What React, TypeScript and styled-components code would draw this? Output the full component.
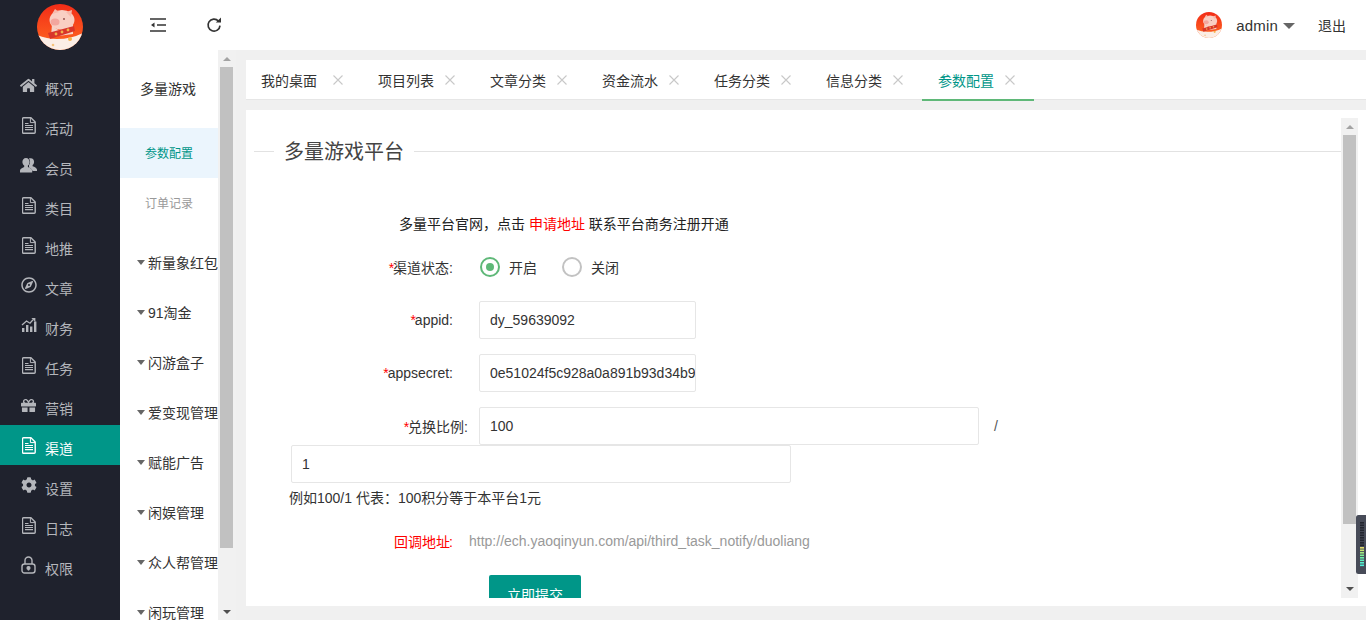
import React from 'react'
import styled, { createGlobalStyle } from 'styled-components'
import { FaHome, FaRegCompass, FaGift, FaCog } from 'react-icons/fa'

const GlobalStyle = createGlobalStyle`
  html, body {
    margin: 0;
    height: 100%;
    overflow: hidden;
    background: #f0f0f0;
    font-family: "Liberation Sans", "Noto Sans CJK SC", sans-serif;
    font-size: 14px;
    color: #333;
  }
  * { box-sizing: border-box; }
`

const Page = styled.div`
  display: flex;
  width: 1366px;
  height: 620px;
  overflow: hidden;
  position: relative;
`

const Sidebar = styled.aside`
  width: 120px;
  flex: none;
  background: #1f222d;
  padding-top: 4px;
`

const Logo = styled.div`
  display: flex;
  justify-content: center;
  height: 46px;
  margin-bottom: 15px;
`

const MenuItem = styled.div<{ $active?: boolean }>`
  display: flex;
  align-items: center;
  height: 40px;
  padding-left: 20px;
  gap: 8px;
  color: ${p => (p.$active ? '#fff' : '#b4b6bb')};
  background: ${p => (p.$active ? '#009688' : 'transparent')};
`

const MenuIcon = styled.span`
  display: flex;
  justify-content: center;
  width: 17px;
  font-size: 16px;
`

const MenuText = styled.span`
  margin-top: 5px;
  font-size: 14px;
`

const Main = styled.div`
  flex: 1;
  min-width: 0;
  display: flex;
  flex-direction: column;
`

const Topbar = styled.header`
  display: flex;
  align-items: center;
  height: 50px;
  flex: none;
  background: #fff;
  padding: 0 20px 0 30px;
`

const ToolButton = styled.span`
  display: flex;
  width: 16px;
  margin-right: 40px;
  color: #333;
`

const UserBox = styled.div`
  display: flex;
  align-items: center;
  margin-left: auto;
  color: #333;
`

const UserName = styled.span`
  margin-left: 14px;
  font-size: 15px;
  letter-spacing: 0.2px;
`

const Caret = styled.span`
  width: 0;
  height: 0;
  margin: 2px 23px 0 5px;
  border-style: solid;
  border-width: 6px 6px 0;
  border-color: #666 transparent transparent;
`

const Logout = styled.span`
  margin-top: -1px;
`

const Body = styled.div`
  flex: 1;
  min-height: 0;
  display: flex;
`

const SubNav = styled.nav`
  width: 98px;
  flex: none;
  background: #fff;
  overflow: hidden;
`

const SubTitle = styled.div`
  height: 78px;
  line-height: 78px;
  padding-left: 20px;
`

const SubLink = styled.div<{ $active?: boolean }>`
  height: 50px;
  line-height: 52px;
  text-align: center;
  font-size: 12px;
  color: ${p => (p.$active ? '#009688' : '#999')};
  background: ${p => (p.$active ? '#ebf5fd' : 'transparent')};
`

const SubGroups = styled.div`
  padding-top: 9px;
`

const SubGroup = styled.div`
  display: flex;
  align-items: center;
  height: 50px;
  padding-left: 17px;
  white-space: nowrap;
`

const GroupCaret = styled.span`
  flex: none;
  width: 0;
  height: 0;
  margin-right: 3px;
  border-style: solid;
  border-width: 5px 4.5px 0;
  border-color: #666 transparent transparent;
`

const Track = styled.div<{ $width: number }>`
  display: flex;
  flex-direction: column;
  flex: none;
  width: ${p => p.$width}px;
  height: 100%;
  background: #f1f1f1;
`

const Thumb = styled.div<{ $top: number; $height: number; $left: number; $width: number }>`
  margin: ${p => p.$top}px 0 0 ${p => p.$left}px;
  width: ${p => p.$width}px;
  height: ${p => p.$height}px;
  background: #c1c1c1;
`

const ArrowUp = styled.span<{ $left: number; $top: number }>`
  display: block;
  width: 0;
  height: 0;
  margin: ${p => p.$top}px 0 0 ${p => p.$left}px;
  border-style: solid;
  border-width: 0 4px 4px;
  border-color: transparent transparent #a3a3a3;
`

const ArrowDown = styled.span<{ $left: number; $bottom: number }>`
  display: block;
  width: 0;
  height: 0;
  margin: auto 0 ${p => p.$bottom}px ${p => p.$left}px;
  border-style: solid;
  border-width: 4px 4px 0;
  border-color: #505050 transparent transparent;
`

const Workspace = styled.div`
  flex: 1;
  min-width: 0;
  display: flex;
  flex-direction: column;
  padding: 10px 0 14px 10px;
`

const TabBar = styled.div`
  display: flex;
  flex: none;
  height: 40px;
  background: #fff;
  border-bottom: 1px solid #e6e6e6;
  margin-bottom: 10px;
`

const Tab = styled.div<{ $active?: boolean }>`
  display: flex;
  align-items: center;
  flex: none;
  width: 112px;
  height: 41px;
  padding-left: 16px;
  gap: 11px;
  font-size: 14px;
  color: ${p => (p.$active ? '#009688' : '#333')};
  border-bottom: 2px solid ${p => (p.$active ? '#5fb878' : 'transparent')};

  &:first-child {
    width: 116px;
    padding-left: 15px;
    gap: 16px;
  }
`

const TabClose = styled.svg`
  width: 10px;
  height: 10px;
  flex: none;
  stroke: #c8c8c8;
  stroke-width: 1.1;
  fill: none;
`

const Panel = styled.section`
  flex: 1;
  min-height: 0;
  display: flex;
  background: #fff;
  padding: 8px;
`

const Scroller = styled.div`
  flex: 1;
  min-width: 0;
  height: 100%;
  overflow: hidden;
`

const Legend = styled.div`
  display: flex;
  align-items: center;
  height: 26px;
  margin-top: 20px;
  margin-bottom: 50px;
  font-size: 20px;
  color: #444;

  &::before {
    content: '';
    width: 20px;
    height: 1px;
    background: #e2e2e2;
    margin-right: 10px;
  }

  &::after {
    content: '';
    flex: 1;
    height: 1px;
    background: #e2e2e2;
    margin-left: 10px;
  }
`

const LegendText = styled.span`
  margin-top: -2px;
`

const Notice = styled.div`
  margin-left: 145px;
  height: 20px;
  line-height: 20px;
  color: #222;
  margin-bottom: 14px;
`

const RedText = styled.span`
  color: #f00;
`

const Row = styled.div`
  display: flex;
  align-items: center;
  height: 38px;
  margin-bottom: 15px;
`

const Label = styled.label<{ $width?: number }>`
  flex: none;
  width: ${p => p.$width || 199}px;
  text-align: right;
  color: #333;
`

const Star = styled.span`
  color: #f00;
  margin-right: -1px;
`

const RadioGroup = styled.div`
  display: flex;
  align-items: center;
  margin-left: 27px;
`

const Radio = styled.span<{ $on?: boolean }>`
  display: flex;
  align-items: center;
  justify-content: center;
  flex: none;
  width: 20px;
  height: 20px;
  border-radius: 50%;
  border: 2px solid ${p => (p.$on ? '#5fb878' : '#c2c2c2')};

  &::after {
    content: '';
    display: ${p => (p.$on ? 'block' : 'none')};
    width: 8px;
    height: 8px;
    border-radius: 50%;
    background: #5fb878;
  }
`

const RadioText = styled.span`
  margin: 0 25px 0 9px;
  color: #333;
`

const Input = styled.input<{ $width: number }>`
  display: block;
  flex: none;
  width: ${p => p.$width}px;
  height: 38px;
  padding: 0 0 0 10px;
  border: 1px solid #e6e6e6;
  border-radius: 2px;
  outline: none;
  font: 14px "Liberation Sans", "Noto Sans CJK SC", sans-serif;
  color: #333;
  background: #fff;
`

const FieldGap = styled.div<{ $width: number }>`
  width: ${p => p.$width}px;
  flex: none;
`

const RatioRow = styled(Row)`
  margin-bottom: 0;
`

const Slash = styled.span`
  margin-left: 15px;
  color: #555;
`

const SecondInput = styled(Input)`
  margin-left: 37px;
`

const Help = styled.div`
  margin: 5px 0 0 35px;
  height: 20px;
  line-height: 20px;
  color: #333;
`

const CallbackRow = styled.div`
  display: flex;
  align-items: center;
  height: 20px;
  margin-top: 23px;
`

const CallbackColon = styled.span`
  color: #f00;
  margin-left: -1px;
`

const CallbackUrl = styled.span`
  margin-left: 16px;
  color: #999;
`

const Submit = styled.button`
  display: block;
  width: 92px;
  height: 38px;
  margin: 24px 0 0 235px;
  padding: 0;
  border: none;
  border-radius: 2px;
  background: #009688;
  color: #fff;
  font: 14px "Liberation Sans", "Noto Sans CJK SC", sans-serif;
`

const Widget = styled.svg`
  position: absolute;
  right: 0;
  top: 515px;
  width: 10px;
  height: 59px;
`

const Avatar: React.FC<{ size: number }> = ({ size }) => (
  <svg width={size} height={size} viewBox="0 0 46 46">
    <defs>
      <linearGradient id="pigSky" x1="0" y1="0" x2="0" y2="1">
        <stop offset="0" stopColor="#f22c17" />
        <stop offset="1" stopColor="#ff6b22" />
      </linearGradient>
      <clipPath id="pigClip">
        <circle cx="23" cy="23" r="23" />
      </clipPath>
    </defs>
    <g clipPath="url(#pigClip)">
      <rect width="46" height="46" fill="url(#pigSky)" />
      <path d="M0 31 Q10 35 20 35 Q34 35 46 29 V46 H0 Z" fill="#fbeee6" />
      <path d="M15 20 Q25 34 36 20 L36 30 L14 33 Z" fill="#f6d2c6" />
      <ellipse cx="25" cy="16" rx="12.5" ry="10" fill="#f9cfc3" />
      <path d="M15 10 L18 5 L22 8 Z M29 8 L35 6 L34 13 Z" fill="#f7b9ab" />
      <ellipse cx="18" cy="18" rx="4.5" ry="3.5" fill="#f3a79e" />
      <circle cx="27" cy="15" r="0.9" fill="#8c4a45" />
      <path d="M11 29 L37 22 L38 27 L13 35 Z" fill="#d8352a" />
      <circle cx="19" cy="30" r="1.4" fill="#f2b04a" />
      <circle cx="25" cy="28" r="1.4" fill="#f2b04a" />
      <circle cx="31" cy="26" r="1.4" fill="#f2b04a" />
      <circle cx="33" cy="35" r="2" fill="#f6b24d" />
      <circle cx="16" cy="41" r="1.3" fill="#f6c27a" />
    </g>
  </svg>
)

const IndentIcon = () => (
  <svg width="16" height="14" viewBox="0 0 16 14" fill="none" stroke="#333" strokeWidth="1.4">
    <path d="M0 1h16M7 7h9M0 13h16" />
    <path d="M4.5 4.5v5L1 7z" fill="#333" stroke="none" />
  </svg>
)

const RefreshIcon = () => (
  <svg width="16" height="16" viewBox="0 0 16 16" fill="none" stroke="currentColor" strokeWidth="1.7">
    <path d="M12.4 4 A6 6 0 1 0 14 8.6" />
    <path d="M9.8 5.6h5.2V0.4z" fill="currentColor" stroke="none" />
  </svg>
)

const FileIcon = () => (
  <svg width="14" height="17" viewBox="0 0 14 17">
    <path d="M1.5 0.8h7.4l4.3 4.3v10.1a1 1 0 0 1-1 1H1.5a1 1 0 0 1-1-1V1.8a1 1 0 0 1 1-1z" fill="none" stroke="currentColor" strokeWidth="1.4" />
    <path d="M8.4 1v4.6H13" fill="none" stroke="currentColor" strokeWidth="1" />
    <path d="M3 6h3.5v1H3zM3 8h8v1H3zM3 10h8v1H3zM3 12h8v1.2H3z" fill="currentColor" />
  </svg>
)

const UsersIcon = () => (
  <svg width="17" height="16" viewBox="0 0 17 16" fill="currentColor">
    <path d="M10.8 1.2c2 0 3.3 1.6 3.3 3.6 0 1.4-.6 2.6-1.5 3.3v1.2c2 .7 4.1 1.6 4.4 3.2V14h-4.4c-.3-1.7-1.8-2.8-3.6-3.6V8c.7-.9 1.1-1.9 1.1-3.1 0-1.3-.5-2.5-1.2-3.3.5-.3 1.2-.4 1.9-.4z" />
    <path d="M6 1c2.2 0 3.6 1.8 3.6 4 0 1.5-.6 2.8-1.7 3.6V10c2.2.8 4 1.8 4.3 3.4V15.6H0v-2.2c.3-1.6 2.1-2.6 4.2-3.4V8.6C3.1 7.8 2.4 6.5 2.4 5 2.4 2.8 3.8 1 6 1z" />
  </svg>
)

const StatsIcon = () => (
  <svg width="16" height="16" viewBox="0 0 16 16" fill="currentColor">
    <path d="M1 11h2.4v4H1zM5 8h2.4v7H5zM9 9.5h2.4V15H9zM13 4.5h2.4V15H13z" />
    <path d="M1 8 L5.5 4 L9 6.2 L12 2.8" fill="none" stroke="currentColor" strokeWidth="1.3" />
    <path d="M10.4 1h4v4z" />
  </svg>
)

const LockIcon = () => (
  <svg width="15" height="18" viewBox="0 0 15 18" fill="none" stroke="currentColor" strokeWidth="1.4">
    <path d="M4 8V4.5a3.5 3.5 0 0 1 7 0V8" />
    <rect x="1" y="8" width="13" height="9" rx="2.5" />
    <circle cx="7.5" cy="12" r="1.4" fill="currentColor" />
    <path d="M7.5 12v2.6" />
  </svg>
)

const menu: { text: string; icon: React.ReactNode; active?: boolean }[] = [
  { text: '概况', icon: <FaHome size={17} /> },
  { text: '活动', icon: <FileIcon /> },
  { text: '会员', icon: <UsersIcon /> },
  { text: '类目', icon: <FileIcon /> },
  { text: '地推', icon: <FileIcon /> },
  { text: '文章', icon: <FaRegCompass size={16} /> },
  { text: '财务', icon: <StatsIcon /> },
  { text: '任务', icon: <FileIcon /> },
  { text: '营销', icon: <FaGift size={15} /> },
  { text: '渠道', icon: <FileIcon />, active: true },
  { text: '设置', icon: <FaCog size={16} /> },
  { text: '日志', icon: <FileIcon /> },
  { text: '权限', icon: <LockIcon /> },
]

const groups = ['新量象红包', '91淘金', '闪游盒子', '爱变现管理', '赋能广告', '闲娱管理', '众人帮管理', '闲玩管理']
const tabs = ['我的桌面', '项目列表', '文章分类', '资金流水', '任务分类', '信息分类', '参数配置']

// dark segments first, then the lit part of the meter
const meterColors = [
  '#22252e', '#22252e', '#22252e', '#22252e', '#22252e', '#22252e', '#22252e', '#22252e', '#22252e', '#22252e',
  '#e0dc6a', '#c4e470', '#a0e880', '#80ec96', '#68eeaa', '#5ceebc', '#54eecb', '#4eeed8',
]

const App: React.FC = () => (
  <Page>
    <GlobalStyle />
    <Sidebar>
      <Logo>
        <Avatar size={46} />
      </Logo>
      {menu.map(item => (
        <MenuItem key={item.text} $active={item.active}>
          <MenuIcon>{item.icon}</MenuIcon>
          <MenuText>{item.text}</MenuText>
        </MenuItem>
      ))}
    </Sidebar>
    <Main>
      <Topbar>
        <ToolButton>
          <IndentIcon />
        </ToolButton>
        <ToolButton>
          <RefreshIcon />
        </ToolButton>
        <UserBox>
          <Avatar size={26} />
          <UserName>admin</UserName>
          <Caret />
          <Logout>退出</Logout>
        </UserBox>
      </Topbar>
      <Body>
        <SubNav>
          <SubTitle>多量游戏</SubTitle>
          <SubLink $active>参数配置</SubLink>
          <SubLink>订单记录</SubLink>
          <SubGroups>
            {groups.map(g => (
              <SubGroup key={g}>
                <GroupCaret />
                {g}
              </SubGroup>
            ))}
          </SubGroups>
        </SubNav>
        <Track $width={18}>
          <ArrowUp $left={5} $top={7} />
          <Thumb $top={6} $left={2} $width={13} $height={481} />
          <ArrowDown $left={5} $bottom={6} />
        </Track>
        <Workspace>
          <TabBar>
            {tabs.map((t, i) => (
              <Tab key={t} $active={i === tabs.length - 1}>
                {t}
                <TabClose viewBox="0 0 10 10">
                  <path d="M0.5 0.5l9 9M9.5 0.5l-9 9" />
                </TabClose>
              </Tab>
            ))}
          </TabBar>
          <Panel>
            <Scroller>
              <Legend>
                <LegendText>多量游戏平台</LegendText>
              </Legend>
              <Notice>
                多量平台官网，点击 <RedText>申请地址</RedText> 联系平台商务注册开通
              </Notice>
              <Row>
                <Label>
                  <Star>*</Star>渠道状态:
                </Label>
                <RadioGroup>
                  <Radio $on />
                  <RadioText>开启</RadioText>
                  <Radio />
                  <RadioText>关闭</RadioText>
                </RadioGroup>
              </Row>
              <Row>
                <Label>
                  <Star>*</Star>appid:
                </Label>
                <FieldGap $width={26} />
                <Input $width={217} readOnly value="dy_59639092" />
              </Row>
              <Row>
                <Label>
                  <Star>*</Star>appsecret:
                </Label>
                <FieldGap $width={26} />
                <Input $width={217} readOnly value="0e51024f5c928a0a891b93d34b9" />
              </Row>
              <RatioRow>
                <Label $width={214}>
                  <Star>*</Star>兑换比例:
                </Label>
                <FieldGap $width={11} />
                <Input $width={500} readOnly value="100" />
                <Slash>/</Slash>
              </RatioRow>
              <SecondInput $width={500} readOnly value="1" />
              <Help>例如100/1 代表：100积分等于本平台1元</Help>
              <CallbackRow>
                <Label>
                  <RedText>回调地址</RedText>
                  <CallbackColon>:</CallbackColon>
                </Label>
                <CallbackUrl>http://ech.yaoqinyun.com/api/third_task_notify/duoliang</CallbackUrl>
              </CallbackRow>
              <Submit type="button">立即提交</Submit>
            </Scroller>
            <Track $width={17}>
              <ArrowUp $left={5} $top={7} />
              <Thumb $top={6} $left={2} $width={13} $height={389} />
              <ArrowDown $left={5} $bottom={7} />
            </Track>
          </Panel>
        </Workspace>
      </Body>
    </Main>
    <Widget viewBox="0 0 10 59">
      <rect x="0" y="0" width="14" height="59" rx="2.5" fill="#474b58" />
      {meterColors.map((c, i) => (
        <rect key={i} x="4" y={7 + i * 2.5} width="4" height="1.6" fill={c} />
      ))}
    </Widget>
  </Page>
)

export default App
